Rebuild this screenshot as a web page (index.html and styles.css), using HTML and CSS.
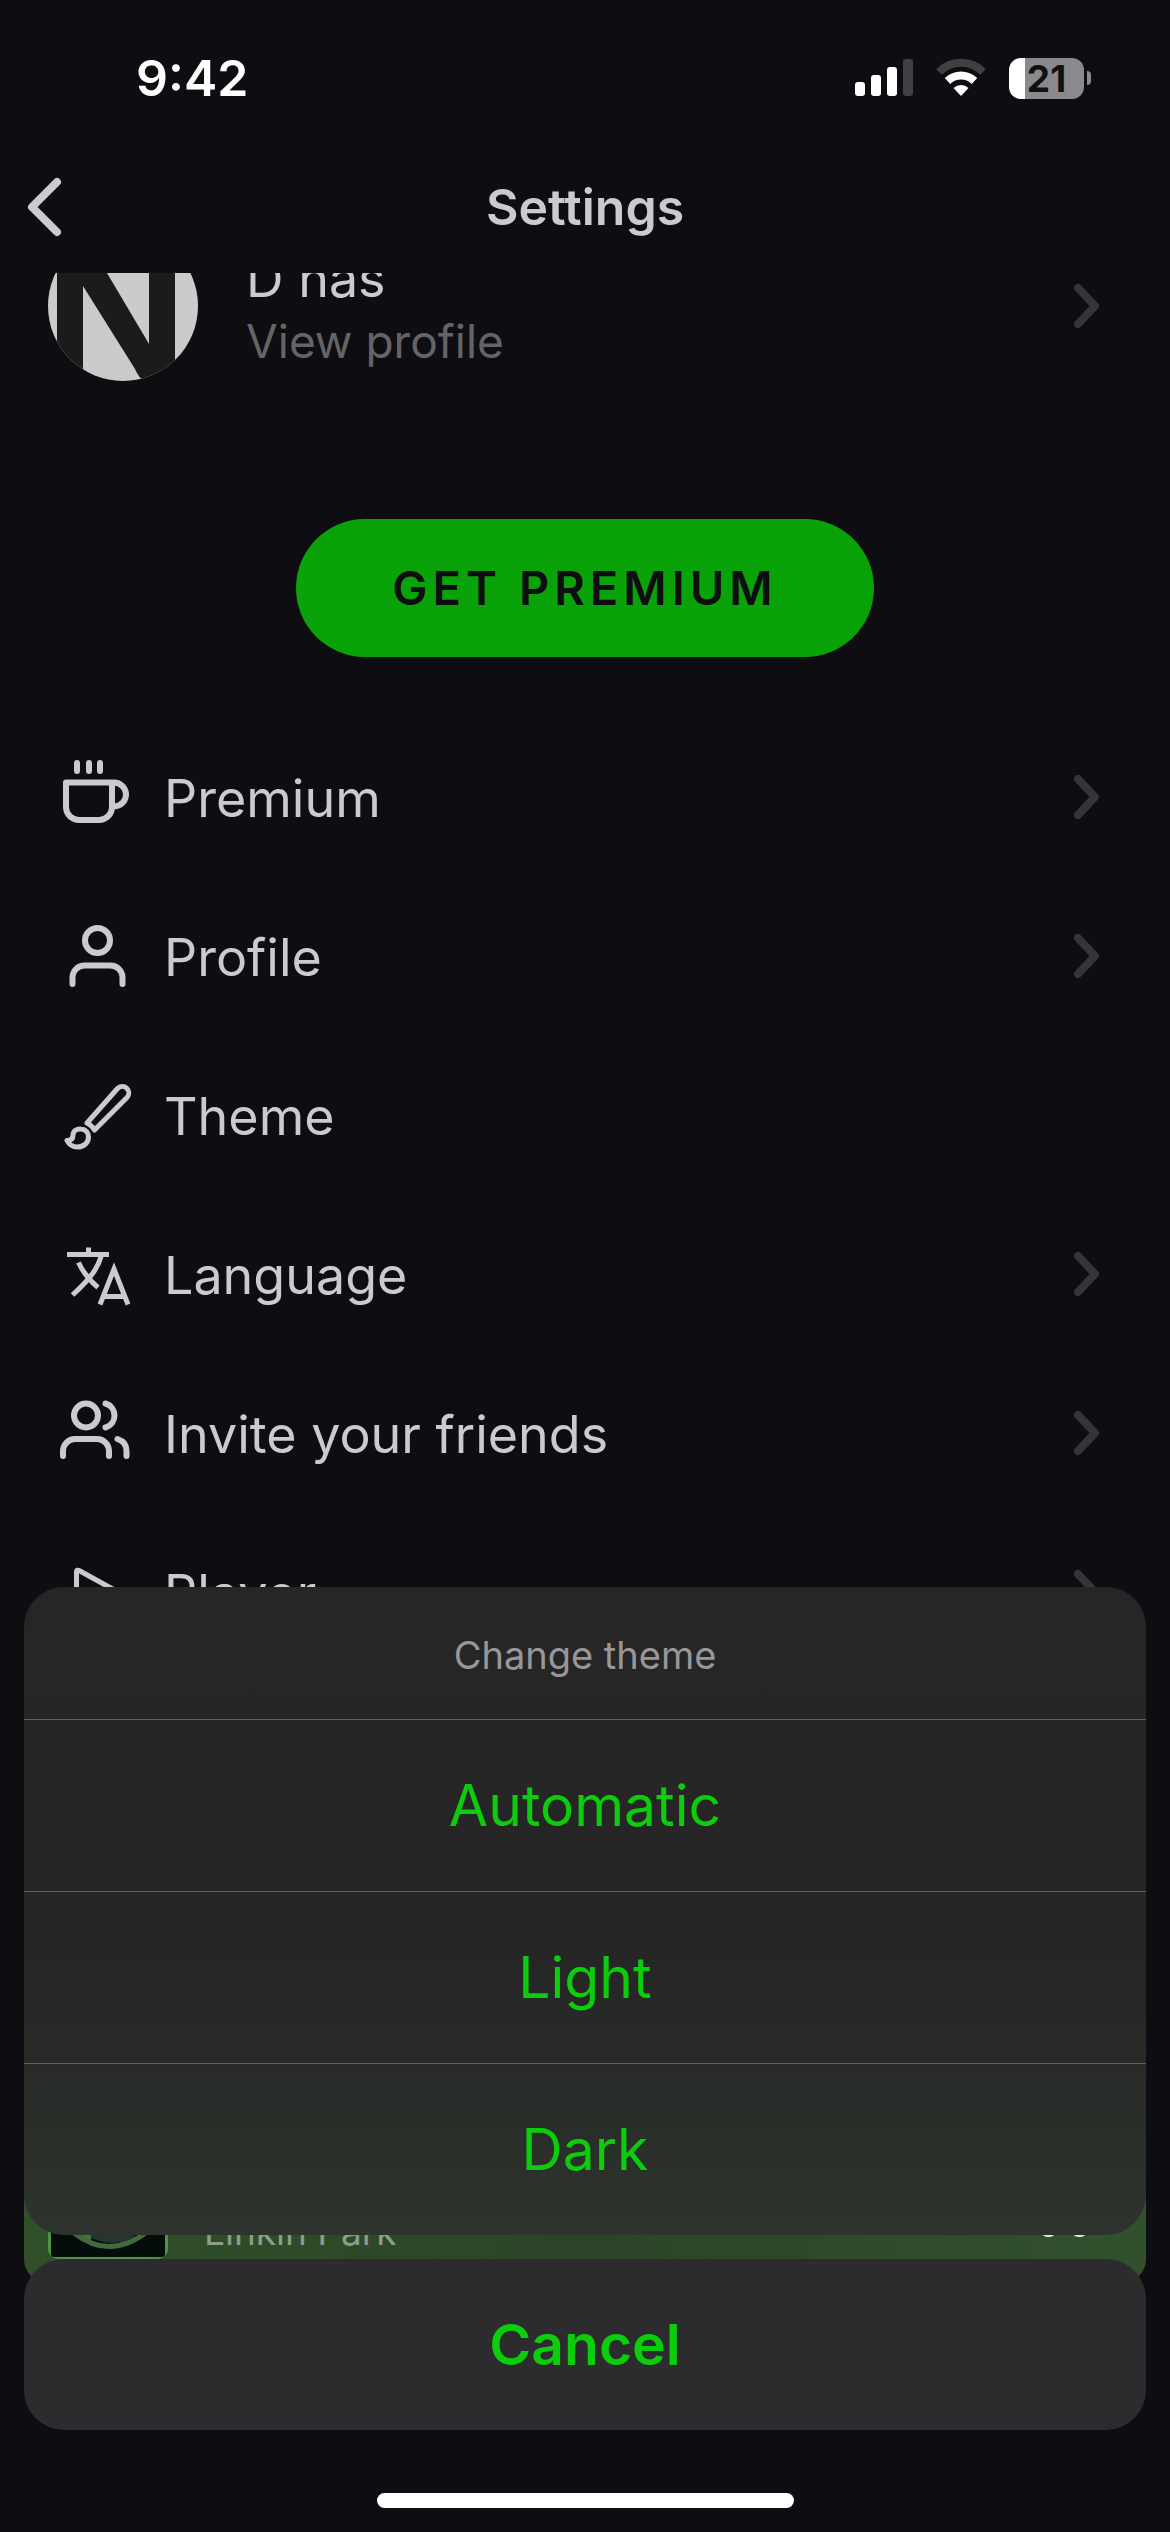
FILE: index.html
```html
<!DOCTYPE html>
<html lang="en">
<head>
  <meta charset="UTF-8">
  <meta name="viewport" content="width=device-width, initial-scale=1.0">
  <link rel="stylesheet" href="styles.css">
  <title>Settings</title>
</head>
<body>

<div class="screen">

  <div class="status-bar">
    <span class="time">9:42</span>
    <div class="status-icons">
      <svg width="58" height="40" viewBox="0 0 58 40" fill="#fff">
        <rect x="0" y="24" width="10" height="14" rx="3"/>
        <rect x="16" y="17" width="10" height="21" rx="3"/>
        <rect x="32" y="9" width="10" height="29" rx="3"/>
        <rect x="48" y="1" width="10" height="37" rx="3" fill="#404043"/>
      </svg>
      <svg width="50" height="40" viewBox="0 0 50 40" fill="none" stroke-width="8">
        <path d="M3 14a31 31 0 0 1 44 0" stroke="#404043"/>
        <path d="M11.500 23a19.500 19.500 0 0 1 27 0" stroke="#fff"/>
        <path d="M25 38l-7.500-8a11 11 0 0 1 15 0z" fill="#fff"/>
      </svg>
      <div class="battery">
        <div class="battery-body">21</div>
        <div class="battery-tip"></div>
      </div>
    </div>
  </div>

  <header class="nav">
    <button class="back" aria-label="Back">
      <svg width="40" height="64" viewBox="0 0 40 64"><path d="M33 7L8 32l25 25"/></svg>
    </button>
    <h1>Settings</h1>
  </header>

  <main class="content">
    <a class="profile" href="#">
      <svg class="avatar" viewBox="0 0 150 150">
        <defs><clipPath id="round"><circle cx="75" cy="75" r="75"/></clipPath></defs>
        <g clip-path="url(#round)">
          <rect width="150" height="150" fill="#cbcbcc"/>
          <rect x="9" width="26" height="150" fill="#1c1a1b"/>
          <rect x="101" width="26" height="150" fill="#1c1a1b"/>
          <path d="M34 0L59 42L101 113V150H96Q91 147 87 138L35 55V0z" fill="#1c1a1b"/>
        </g>
      </svg>
      <div class="profile-text">
        <span class="name">D has</span>
        <span class="view">View profile</span>
      </div>
      <svg class="chevron" viewBox="0 0 26 46"><path d="M4 5l17 18L4 41"/></svg>
    </a>

    <button class="premium">GET PREMIUM</button>

    <nav class="menu">
      <a class="row" href="#">
        <svg class="icon" viewBox="0 0 72 72">
          <path d="M17 2v8M29 2v8M40 2v8"/>
          <path d="M6 21.500H52V46a13 13 0 0 1-13 13H19A13 13 0 0 1 6 46zM52 21.500h2a12 12 0 0 1 0 24h-2"/>
        </svg>
        <span>Premium</span>
        <svg class="chevron" viewBox="0 0 26 46"><path d="M4 5l17 18L4 41"/></svg>
      </a>
      <a class="row" href="#">
        <svg class="icon" viewBox="0 0 72 72">
          <circle cx="37.500" cy="20.500" r="12.500"/>
          <path d="M12.500 64V57a12 12 0 0 1 12-11.500h26a12 12 0 0 1 12 11.500v7"/>
        </svg>
        <span>Profile</span>
        <svg class="chevron" viewBox="0 0 26 46"><path d="M4 5l17 18L4 41"/></svg>
      </a>
      <a class="row" href="#">
        <svg class="icon thin" viewBox="0 0 72 72">
          <path d="M27 44L57.500 9.500a6.500 6.500 0 0 1 9.500 9L34.500 51Q32 46.500 27 44z"/>
          <path d="M7 61.500c4 0 6-2 6-5.500 0-4 4-6.500 8-6 5 .5 7.500 4 7.500 8 0 6-5 10-11 10-5 0-8.500-2.500-10.500-6.500z"/>
        </svg>
        <span>Theme</span>
      </a>
      <a class="row" href="#">
        <svg class="icon thin square" viewBox="0 0 72 72">
          <path d="M7 16.500H49M28.500 9.500v7M41.500 17C38 30 31 40 12.500 57M18.500 24.500C23 34 30 43 38 49.500"/>
          <path d="M40 66.500L54 31l14 35.500M44.500 58.500h19"/>
        </svg>
        <span>Language</span>
        <svg class="chevron" viewBox="0 0 26 46"><path d="M4 5l17 18L4 41"/></svg>
      </a>
      <a class="row" href="#">
        <svg class="icon" viewBox="0 0 72 72">
          <circle cx="26" cy="18.500" r="12"/>
          <path d="M45.500 6.500a12.500 12.500 0 0 1 0 24"/>
          <path d="M3 59V54a12 12 0 0 1 12-12h22a12 12 0 0 1 12 12v5M57.500 42q9 3 9 12v5"/>
        </svg>
        <span>Invite your friends</span>
        <svg class="chevron" viewBox="0 0 26 46"><path d="M4 5l17 18L4 41"/></svg>
      </a>
      <a class="row" href="#">
        <svg class="icon thin" viewBox="0 0 72 72">
          <path d="M16.500 16q0-3 3.500-1L58 36q3 2 0 4L20 61q-3.500 2-3.500-1z"/>
        </svg>
        <span>Player</span>
        <svg class="chevron" viewBox="0 0 26 46"><path d="M4 5l17 18L4 41"/></svg>
      </a>
    </nav>
  </main>

  <!-- mini player, mostly hidden behind the action sheet -->
  <div class="mini-player">
    <svg class="cover" viewBox="0 0 120 120">
      <rect width="120" height="120" rx="10" fill="#4f9440"/>
      <rect x="3" y="3" width="114" height="115" rx="3" fill="#050c0c"/>
      <path d="M22 92l16-2 8 6-6 8z" fill="#3f7a36"/>
      <path d="M26 94Q62 122 100 92" fill="none" stroke="#416b3c" stroke-width="5"/>
      <path d="M46 92h44q-6 12-28 12-14-2-20-6z" fill="#28342f"/>
    </svg>
    <span class="artist">Linkin Park</span>
    <svg class="pause" viewBox="0 0 44 50"><rect width="13" height="50" rx="5"/><rect x="31" width="13" height="50" rx="5"/></svg>
  </div>

  <div class="sheet">
    <div class="options">
      <p>Change theme</p>
      <button>Automatic</button>
      <button>Light</button>
      <button>Dark</button>
    </div>
    <button class="cancel">Cancel</button>
    <div class="home-indicator"></div>
  </div>

</div>

</body>
</html>
```
FILE: styles.css
```css
* {
  box-sizing: border-box;
}

body {
  margin: 0;
  background-color: #0e0d12;
  color: #cbcbcd;
  font-family: Inter, 'Liberation Sans', sans-serif;
}

button {
  border: none;
  font-family: inherit;
  cursor: pointer;
}

a {
  color: inherit;
  text-decoration: none;
}

svg {
  flex-shrink: 0;
}

.screen {
  position: relative;
  display: flex;
  flex-direction: column;
  height: 100vh;
  overflow: hidden;
}

/* status bar */
.status-bar {
  display: flex;
  align-items: center;
  justify-content: space-between;
  height: 140px;
  padding: 16px 79px 0 136px;
  color: #fff;
}

.time {
  font-size: 50px;
  font-weight: 600;
}

.status-icons {
  display: flex;
  align-items: center;
  gap: 23px;
}

.battery {
  display: flex;
  align-items: center;
  gap: 3px;
}

.battery-body {
  width: 75px;
  height: 41px;
  border-radius: 12px;
  background: linear-gradient(to right, #fff 21%, #8a898d 21%);
  color: #111015;
  font-size: 37px;
  font-weight: 700;
  line-height: 41px;
  text-align: center;
}

.battery-tip {
  width: 4px;
  height: 14px;
  border-radius: 0 6px 6px 0;
  background-color: #8a898d;
}

/* top navigation */
.nav {
  display: grid;
  grid-template-columns: 1fr auto 1fr;
  align-items: center;
  height: 133px;
  padding: 0 24px;
}

.nav h1 {
  margin: 0;
  font-size: 50px;
  font-weight: 600;
}

.back {
  justify-self: start;
  display: flex;
  padding: 0;
  background: none;
}

.back path {
  fill: none;
  stroke: #cbcbcd;
  stroke-width: 8;
  stroke-linecap: round;
  stroke-linejoin: round;
}

.content {
  display: flex;
  flex-direction: column;
  flex: 1;
  overflow: hidden;
}

/* the list is scrolled a little under the header */
.profile {
  display: flex;
  align-items: center;
  margin-top: -42px;
  padding: 0 70px 0 48px;
}

.avatar {
  width: 150px;
  height: 150px;
}

.profile-text {
  display: flex;
  flex: 1;
  flex-direction: column;
  padding: 8px 0 0 48px;
  line-height: 62px;
}

.name {
  font-size: 52px;
}

.view {
  color: #646467;
  font-size: 46px;
}

.chevron {
  width: 26px;
  height: 46px;
  fill: none;
  stroke: #34343a;
  stroke-width: 8;
  stroke-linecap: round;
  stroke-linejoin: round;
}

.premium {
  align-self: center;
  margin: 138px 0 60px;
  padding: 0 96px;
  border-radius: 69px;
  background-color: #09a309;
  color: #0e0d12;
  font-size: 47px;
  font-weight: 600;
  line-height: 138px;
  letter-spacing: 5px;
}

.row {
  display: flex;
  align-items: center;
  gap: 32px;
  height: 159px;
  padding: 0 70px 0 60px;
  font-size: 52px;
}

.row span {
  flex: 1;
  padding-top: 4px;
}

.icon {
  width: 72px;
  height: 72px;
  overflow: visible;
  fill: none;
  stroke: #cbcbcd;
  stroke-width: 6;
  stroke-linecap: round;
  stroke-linejoin: round;
}

.thin {
  stroke-width: 5;
}

.square {
  stroke-linecap: butt;
  stroke-linejoin: miter;
}

.mini-player {
  position: absolute;
  left: 24px;
  right: 24px;
  bottom: 249px;
  display: flex;
  align-items: center;
  height: 168px;
  padding: 0 60px 0 24px;
  border-radius: 24px;
  background: linear-gradient(to right, #2f5029, #2c4428 50%, #31512d);
}

.cover {
  width: 120px;
  height: 120px;
}

.artist {
  flex: 1;
  padding: 64px 0 0 36px;
  color: #8a9e88;
  font-size: 37px;
}

.pause {
  align-self: flex-end;
  width: 44px;
  height: 50px;
  margin-bottom: 46px;
  fill: #dfe4de;
}

/* action sheet */
.sheet {
  position: absolute;
  left: 0;
  right: 0;
  bottom: 0;
  display: flex;
  flex-direction: column;
  gap: 24px;
  padding: 0 24px 24px;
}

.options {
  border-radius: 40px;
  overflow: hidden;
  background: linear-gradient(#262627, #252526 55%, #282b28 75%, #2e342d);
}

.options p {
  margin: 0;
  color: #97979a;
  font-size: 38px;
  line-height: 132px;
  padding-top: 2px;
  margin-bottom: -2px;
  text-align: center;
}

.options button {
  display: block;
  width: 100%;
  border-top: 1px solid #5f6160;
  background: none;
  line-height: 171px;
}

.options button,
.cancel {
  padding: 0;
  color: #0ccd0c;
  font-size: 57px;
}

.cancel {
  border-radius: 40px;
  background-color: #2c2c2e;
  font-weight: 600;
  line-height: 171px;
}

.home-indicator {
  align-self: center;
  width: 417px;
  height: 15px;
  margin-top: 39px;
  border-radius: 8px;
  background-color: #fff;
}
```
